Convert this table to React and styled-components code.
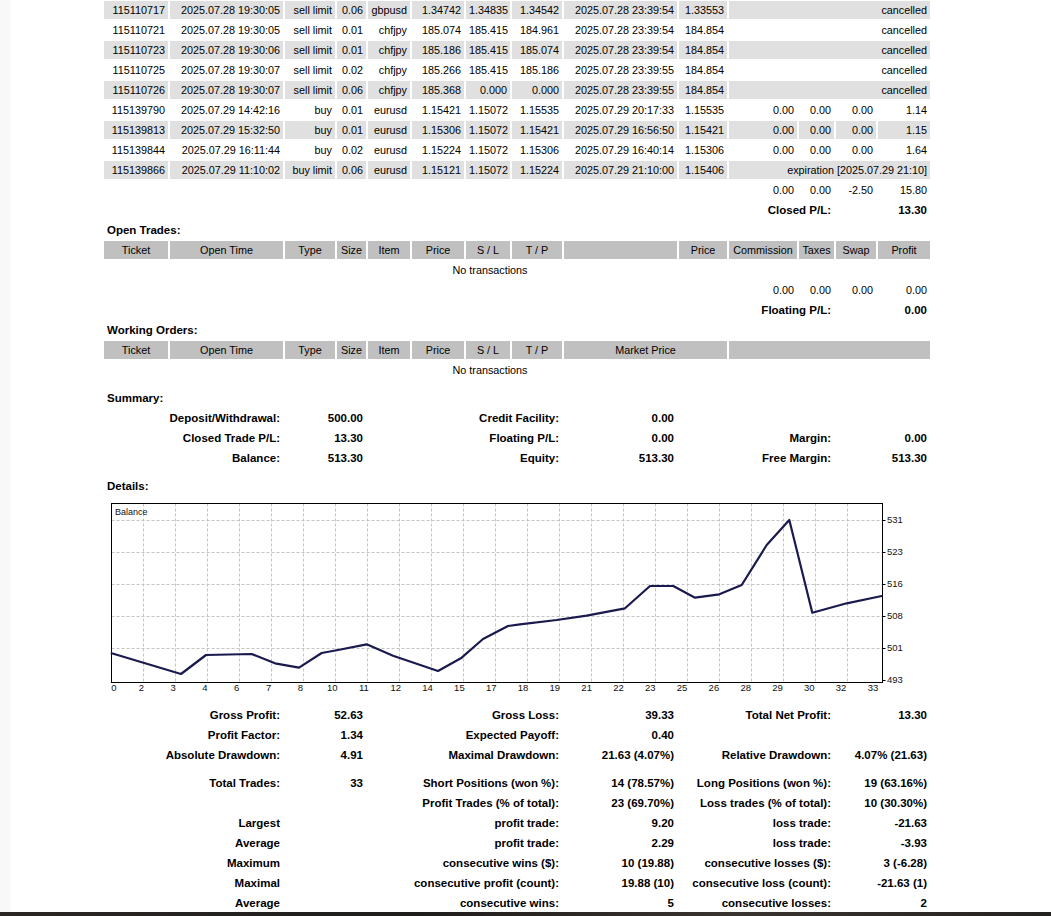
import React from 'react';
import styled, { createGlobalStyle } from 'styled-components';

const GlobalStyle = createGlobalStyle`
  html, body { margin: 0; padding: 0; background: #ffffff; }
  body { font-family: "Liberation Sans", Arial, sans-serif; color: #000; }
`;

const Page = styled.div`
  width: 1051px;
  height: 916px;
  display: flex;
  flex-direction: column;
  overflow: hidden;
  background: linear-gradient(90deg, #f8f8f8 0px, #f8f8f8 10px, #ffffff 11px);
`;

const Report = styled.table`
  table-layout: fixed;
  width: 830px;
  border-collapse: separate;
  border-spacing: 2px;
  margin: -1px 0 -2px 102px;
  font-size: 10.8px;
  flex: none;
`;

const Row = styled.tr`
  & > td {
    background: ${(p) => (p.$shaded ? '#e0e0e0' : 'transparent')};
  }
`;

const HeaderRow = styled.tr`
  & > td {
    background: #c0c0c0;
    text-align: center;
  }
`;

const Cell = styled.td`
  height: 18px;
  padding: 0 3px;
  line-height: 18px;
  white-space: nowrap;
  overflow: hidden;
  text-align: ${(p) => p.$align || 'right'};
  font-weight: ${(p) => (p.$bold ? 700 : 400)};
  font-size: ${(p) => (p.$bold ? '11.5px' : '10.8px')};
`;

const SpacerCell = styled.td`
  height: ${(p) => p.$h}px;
  padding: 0;
  line-height: 0;
  font-size: 0;
`;

const ChartCell = styled.td`
  height: 207px;
  padding: 0;
  background: #fff;
`;

const ChartSvg = styled.svg`
  display: block;
  width: 826px;
  height: 207px;
  font-family: "Liberation Sans", Arial, sans-serif;
`;

const Footer = styled.div`
  height: 4px;
  flex: none;
  background: linear-gradient(90deg, #2a2725 0%, #1f1d1c 40%, #3a3430 70%, #242221 100%);
`;

const colWidths = [64, 113, 50, 29, 42, 52, 44, 50, 113, 48, 68, 35, 40, 52];

const closed = [
  ['115110717', '2025.07.28 19:30:05', 'sell limit', '0.06', 'gbpusd', '1.34742', '1.34835', '1.34542', '2025.07.28 23:39:54', '1.33553', 'cancelled'],
  ['115110721', '2025.07.28 19:30:05', 'sell limit', '0.01', 'chfjpy', '185.074', '185.415', '184.961', '2025.07.28 23:39:54', '184.854', 'cancelled'],
  ['115110723', '2025.07.28 19:30:06', 'sell limit', '0.01', 'chfjpy', '185.186', '185.415', '185.074', '2025.07.28 23:39:54', '184.854', 'cancelled'],
  ['115110725', '2025.07.28 19:30:07', 'sell limit', '0.02', 'chfjpy', '185.266', '185.415', '185.186', '2025.07.28 23:39:55', '184.854', 'cancelled'],
  ['115110726', '2025.07.28 19:30:07', 'sell limit', '0.06', 'chfjpy', '185.368', '0.000', '0.000', '2025.07.28 23:39:55', '184.854', 'cancelled'],
  ['115139790', '2025.07.29 14:42:16', 'buy', '0.01', 'eurusd', '1.15421', '1.15072', '1.15535', '2025.07.29 20:17:33', '1.15535', '0.00', '0.00', '0.00', '1.14'],
  ['115139813', '2025.07.29 15:32:50', 'buy', '0.01', 'eurusd', '1.15306', '1.15072', '1.15421', '2025.07.29 16:56:50', '1.15421', '0.00', '0.00', '0.00', '1.15'],
  ['115139844', '2025.07.29 16:11:44', 'buy', '0.02', 'eurusd', '1.15224', '1.15072', '1.15306', '2025.07.29 16:40:14', '1.15306', '0.00', '0.00', '0.00', '1.64'],
  ['115139866', '2025.07.29 11:10:02', 'buy limit', '0.06', 'eurusd', '1.15121', '1.15072', '1.15224', '2025.07.29 21:10:00', '1.15406', 'expiration [2025.07.29 21:10]'],
];

const summary = [
  ['Deposit/Withdrawal:', '500.00', 'Credit Facility:', '0.00', '', ''],
  ['Closed Trade P/L:', '13.30', 'Floating P/L:', '0.00', 'Margin:', '0.00'],
  ['Balance:', '513.30', 'Equity:', '513.30', 'Free Margin:', '513.30'],
];

const stats1 = [
  ['Gross Profit:', '52.63', 'Gross Loss:', '39.33', 'Total Net Profit:', '13.30'],
  ['Profit Factor:', '1.34', 'Expected Payoff:', '0.40', '', ''],
  ['Absolute Drawdown:', '4.91', 'Maximal Drawdown:', '21.63 (4.07%)', 'Relative Drawdown:', '4.07% (21.63)'],
];

const stats2 = [
  ['Total Trades:', '33', 'Short Positions (won %):', '14 (78.57%)', 'Long Positions (won %):', '19 (63.16%)'],
  ['', '', 'Profit Trades (% of total):', '23 (69.70%)', 'Loss trades (% of total):', '10 (30.30%)'],
  ['Largest', '', 'profit trade:', '9.20', 'loss trade:', '-21.63'],
  ['Average', '', 'profit trade:', '2.29', 'loss trade:', '-3.93'],
  ['Maximum', '', 'consecutive wins ($):', '10 (19.88)', 'consecutive losses ($):', '3 (-6.28)'],
  ['Maximal', '', 'consecutive profit (count):', '19.88 (10)', 'consecutive loss (count):', '-21.63 (1)'],
  ['Average', '', 'consecutive wins:', '5', 'consecutive losses:', '2'],
];

const statSpans = [2, 2, 4, 1, 3, 2];

const openHeader = ['Ticket', 'Open Time', 'Type', 'Size', 'Item', 'Price', 'S / L', 'T / P', '', 'Price', 'Commission', 'Taxes', 'Swap', 'Profit'];
const workHeader = ['Ticket', 'Open Time', 'Type', 'Size', 'Item', 'Price', 'S / L', 'T / P'];

function Title({ children }) {
  return (
    <Row>
      <Cell colSpan={14} $align="left" $bold>{children}</Cell>
    </Row>
  );
}

function Spacer({ h }) {
  return (
    <tr>
      <SpacerCell colSpan={14} $h={h} />
    </tr>
  );
}

function StatRow({ values }) {
  return (
    <Row>
      {values.map((v, i) => (
        <Cell key={i} colSpan={statSpans[i]} $bold>{v}</Cell>
      ))}
    </Row>
  );
}

function ClosedRow({ data, shaded }) {
  const base = data.slice(0, 10);
  const rest = data.slice(10);
  return (
    <Row $shaded={shaded}>
      {base.map((v, i) => (
        <Cell key={i}>{v}</Cell>
      ))}
      {rest.length === 1 ? (
        <Cell colSpan={4}>{rest[0]}</Cell>
      ) : (
        rest.map((v, i) => <Cell key={'r' + i}>{v}</Cell>)
      )}
    </Row>
  );
}

function TotalsRow({ values }) {
  return (
    <Row>
      <Cell colSpan={10} />
      {values.map((v, i) => (
        <Cell key={i}>{v}</Cell>
      ))}
    </Row>
  );
}

function PLRow({ label, value }) {
  return (
    <Row>
      <Cell colSpan={10} />
      <Cell colSpan={2} $bold>{label}</Cell>
      <Cell colSpan={2} $bold>{value}</Cell>
    </Row>
  );
}

function EmptyRow() {
  return (
    <Row>
      <Cell colSpan={13} $align="center">No transactions</Cell>
      <Cell />
    </Row>
  );
}

const balancePts = [
  [7.7, 155.3], [77, 176], [102, 157], [147.7, 156], [171, 165.3], [195, 169.7],
  [217.7, 155], [234, 152], [262.7, 146.3], [289, 157.7], [334, 173], [357.7, 159.7],
  [379, 141], [404, 128], [416, 126.3], [452.7, 122], [482.7, 117.7], [521, 110.3],
  [546, 88], [569.3, 88], [591, 99.7], [615.3, 96.3], [637.7, 87], [662.7, 47],
  [685.3, 22], [708.3, 114.7], [742.7, 105.3], [777.7, 98],
];

const xLabels = ['0', '2', '3', '4', '6', '7', '8', '10', '11', '12', '14', '15', '17', '18', '19', '21', '22', '23', '25', '26', '28', '29', '30', '32', '33'];
const yLabels = [
  ['531', 22], ['523', 54], ['516', 86], ['508', 118], ['501', 150], ['493', 182],
];

function BalanceChart() {
  const left = 7.5;
  const top = 5.5;
  const w = 771;
  const h = 179;
  const vLines = Array.from({ length: 23 }, (_, i) => left + 32 * (i + 1));
  const hLines = [22.5, 54.5, 86.5, 118.5, 150.5];
  return (
    <ChartSvg viewBox="0 0 826 207">
      <g transform="translate(0,1)">
        {vLines.map((x) => (
          <line key={'v' + x} x1={x} y1={top} x2={x} y2={top + h} stroke="#c4c4c4" strokeDasharray="3 2" strokeWidth="1" />
        ))}
        {hLines.map((y) => (
          <line key={'h' + y} x1={left} y1={y} x2={left + w} y2={y} stroke="#c4c4c4" strokeDasharray="3 2" strokeWidth="1" />
        ))}
        <rect x={left} y={top} width={w} height={h} fill="none" stroke="#000" strokeWidth="1" />
        <text x="11" y="16.5" fontSize="9" fill="#111">Balance</text>
        {yLabels.map(([t, y]) => (
          <g key={t}>
            <line x1={left + w} y1={y + 0.5} x2={left + w + 3} y2={y + 0.5} stroke="#000" strokeWidth="1" />
            <text x="783" y={y} fontSize="9.5" fill="#111" dominantBaseline="middle">{t}</text>
          </g>
        ))}
        {xLabels.map((t, k) => (
          <text
            key={k}
            x={k === 0 ? 10 : 5.5 + 31.81 * k}
            y="190.5"
            fontSize="9.5"
            fill="#111"
            textAnchor="middle"
            dominantBaseline="middle"
          >
            {t}
          </text>
        ))}
        <polyline
          points={balancePts.map((p) => p.join(',')).join(' ')}
          fill="none"
          stroke="#1a1a4e"
          strokeWidth="2.2"
          strokeLinejoin="round"
          strokeLinecap="round"
        />
      </g>
    </ChartSvg>
  );
}

export default function App() {
  return (
    <Page>
      <GlobalStyle />
      <Report>
        <colgroup>
          {colWidths.map((w, i) => (
            <col key={i} style={{ width: w + 'px' }} />
          ))}
        </colgroup>
        <tbody>
          {closed.map((r, i) => (
            <ClosedRow key={r[0]} data={r} shaded={i % 2 === 0} />
          ))}
          <TotalsRow values={['0.00', '0.00', '-2.50', '15.80']} />
          <PLRow label="Closed P/L:" value="13.30" />

          <Title>Open Trades:</Title>
          <HeaderRow>
            {openHeader.map((h, i) => (
              <Cell key={i}>{h}</Cell>
            ))}
          </HeaderRow>
          <EmptyRow />
          <TotalsRow values={['0.00', '0.00', '0.00', '0.00']} />
          <PLRow label="Floating P/L:" value="0.00" />

          <Title>Working Orders:</Title>
          <HeaderRow>
            {workHeader.map((h, i) => (
              <Cell key={i}>{h}</Cell>
            ))}
            <Cell colSpan={2}>Market Price</Cell>
            <Cell colSpan={4} />
          </HeaderRow>
          <EmptyRow />
          <Spacer h={6} />

          <Title>Summary:</Title>
          {summary.map((r, i) => (
            <StatRow key={i} values={r} />
          ))}
          <Spacer h={6} />

          <Title>Details:</Title>
          <tr>
            <ChartCell colSpan={14}>
              <BalanceChart />
            </ChartCell>
          </tr>
          {stats1.map((r, i) => (
            <StatRow key={'a' + i} values={r} />
          ))}
          <Spacer h={6} />
          {stats2.map((r, i) => (
            <StatRow key={'b' + i} values={r} />
          ))}
        </tbody>
      </Report>
      <Footer />
    </Page>
  );
}
